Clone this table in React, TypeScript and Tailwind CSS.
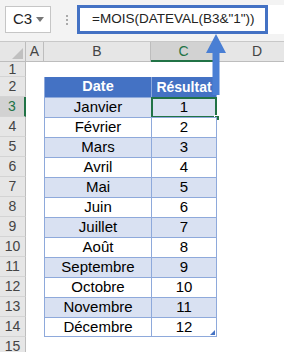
const months = [
  "Janvier",
  "Février",
  "Mars",
  "Avril",
  "Mai",
  "Juin",
  "Juillet",
  "Août",
  "Septembre",
  "Octobre",
  "Novembre",
  "Décembre",
];

const font = { fontFamily: '"Liberation Sans", Arial, sans-serif' };

function RowHead({ n, h, active }: { n: number; h: string; active?: boolean }) {
  return (
    <div
      className={`${h} flex items-center justify-center border-b border-[#d4d4d4] text-[14px] ${
        active
          ? "bg-[#d2d2d2] text-[#217346] border-r-2 border-r-[#217346]"
          : "bg-[#e6e6e6] text-[#444] border-r border-r-[#bdbdbd]"
      }`}
    >
      {n}
    </div>
  );
}

export default function App() {
  return (
    <div className="relative w-[284px] h-[352px] overflow-hidden bg-white text-black" style={font}>
      {/* Formula bar */}
      <div className="h-[42px] bg-[#f3f3f3] border-b border-[#c8c8c8] flex items-start pt-[5px]">
        <div className="ml-[5px] mt-[1px] w-[46px] h-[27px] bg-white border border-[#c6c6c6] flex items-center justify-between pl-[7px] pr-[6px]">
          <span className="text-[15px] text-[#222]">C3</span>
          <span className="w-0 h-0 border-l-[4px] border-r-[4px] border-t-[5px] border-l-transparent border-r-transparent border-t-[#777]" />
        </div>
        <div className="ml-[15px] mt-[10px] flex flex-col gap-[2px]">
          <span className="w-[2px] h-[2px] bg-[#aaa]" />
          <span className="w-[2px] h-[2px] bg-[#aaa]" />
          <span className="w-[2px] h-[2px] bg-[#aaa]" />
        </div>
        <div className="ml-[9px] w-[191px] h-[29px] bg-white border-[3px] border-[#4472c4] flex items-center pl-[12px] overflow-hidden">
          <span className="whitespace-nowrap text-[13.5px] text-[#222]">=MOIS(DATEVAL(B3&amp;"1"))</span>
        </div>
        <div className="flex-1 h-[29px] bg-white" />
      </div>

      {/* Grid */}
      <div className="grid grid-cols-[26px_18px_107px_66px_1fr]">
        {/* Column headers */}
        <div className="relative h-[20px] bg-[#e6e6e6] border-r border-b border-[#bdbdbd]">
          <span className="absolute right-[2px] bottom-[2px] w-0 h-0" style={{ borderBottom: "11px solid #c0c0c0", borderLeft: "11px solid transparent" }} />
        </div>
        <div className="h-[20px] bg-[#e6e6e6] border-r border-b border-[#bdbdbd] flex items-center justify-center text-[14px] text-[#444]">A</div>
        <div className="h-[20px] bg-[#e6e6e6] border-r border-b border-[#bdbdbd] flex items-center justify-center text-[14px] text-[#444]">B</div>
        <div className="h-[20px] bg-[#d2d2d2] border-r border-[#bdbdbd] border-b-2 border-b-[#217346] flex items-center justify-center text-[14px] text-[#217346]">C</div>
        <div className="h-[20px] bg-[#e6e6e6] border-b border-[#bdbdbd] flex items-center justify-start pl-[35px] text-[14px] text-[#444]">D</div>

        {/* Row 1 */}
        <RowHead n={1} h="h-[15px]" />
        <div className="h-[15px]" />
        <div className="h-[15px]" />
        <div className="h-[15px]" />
        <div className="h-[15px]" />

        {/* Row 2 - table header */}
        <RowHead n={2} h="h-[20px]" />
        <div className="h-[20px]" />
        <div className="h-[20px] bg-[#4472c4] border-l border-[#8ea9db] flex items-center justify-center text-white font-bold text-[14.5px]">Date</div>
        <div className="h-[20px] bg-[#4472c4] border-l border-r border-[#8ea9db] flex items-center justify-center text-white font-bold text-[14px]">Résultat</div>
        <div className="h-[20px]" />

        {months.map((m, i) => {
          const band = i % 2 === 0 ? "bg-[#d9e1f2]" : "bg-white";
          const row = i + 3;
          return (
            <>
              <RowHead key={`h${row}`} n={row} h="h-[20px]" active={row === 3} />
              <div key={`a${row}`} className="h-[20px]" />
              <div key={`b${row}`} className={`h-[20px] ${band} border-l border-t border-[#8ea9db] ${row === 14 ? "border-b" : ""} flex items-center justify-center text-[15px]`}>
                {m}
              </div>
              <div key={`c${row}`} className={`relative h-[20px] ${band} border-l border-r border-t border-[#8ea9db] ${row === 14 ? "border-b" : ""} flex items-center justify-center text-[15px]`}>
                {i + 1}
                {row === 3 && (
                  <>
                    <span className="absolute -left-[1px] -top-[1px] -right-[1px] -bottom-[1px] border-2 border-[#217346]" />
                    <span className="absolute -right-[4px] -bottom-[4px] w-[6px] h-[6px] bg-[#217346] border border-white" />
                  </>
                )}
                {row === 14 && (
                  <span className="absolute right-[1px] bottom-[1px] w-0 h-0" style={{ borderBottom: "5px solid #4472c4", borderLeft: "5px solid transparent" }} />
                )}
              </div>
              <div key={`d${row}`} className="h-[20px]" />
            </>
          );
        })}

        <RowHead n={15} h="h-[20px]" />
        <div className="h-[20px]" />
        <div className="h-[20px]" />
        <div className="h-[20px]" />
        <div className="h-[20px]" />
      </div>

      {/* Arrow */}
      <svg className="absolute left-[205px] top-[34px]" width="22" height="62" viewBox="0 0 22 62">
        <polygon points="11,0 21,19 14.5,19 14.5,61 7.5,61 7.5,19 1,19" fill="#4a7fd4" />
      </svg>
    </div>
  );
}
